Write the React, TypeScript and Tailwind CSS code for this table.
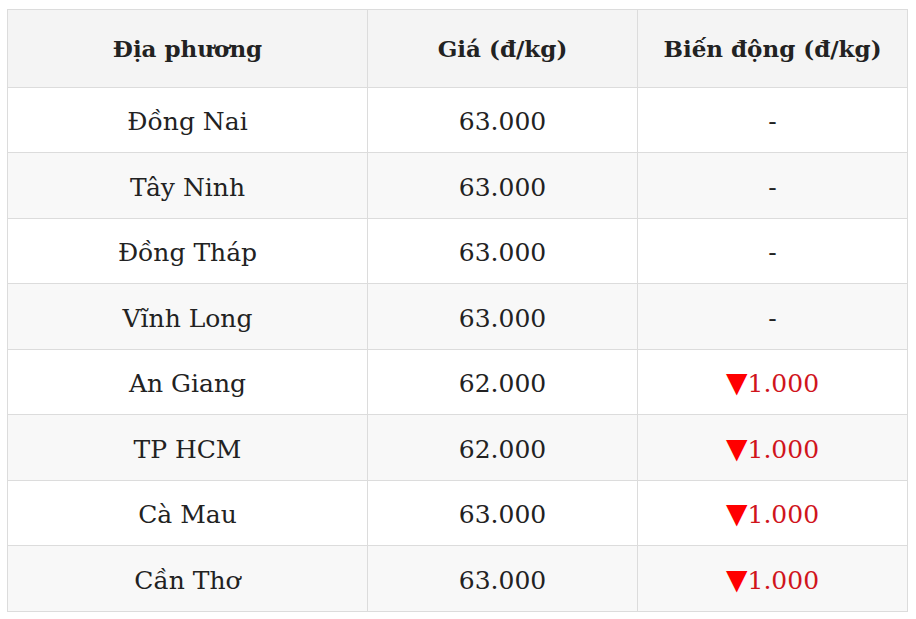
import React from "react";

type Row = { place: string; price: string; change: string | null };

const rows: Row[] = [
    { place: "Đồng Nai", price: "63.000", change: null },
    { place: "Tây Ninh", price: "63.000", change: null },
    { place: "Đồng Tháp", price: "63.000", change: null },
    { place: "Vĩnh Long", price: "63.000", change: null },
    { place: "An Giang", price: "62.000", change: "1.000" },
    { place: "TP HCM", price: "62.000", change: "1.000" },
    { place: "Cà Mau", price: "63.000", change: "1.000" },
    { place: "Cần Thơ", price: "63.000", change: "1.000" },
];

const App: React.FC = () => {
    return (
        <div className="bg-white w-[916px] h-[619px] pt-[9px] pl-[7px] font-['DejaVu_Serif',serif] text-[#222]">
            <table className="table-fixed border-collapse w-[900px] text-center">
                <colgroup>
                    <col className="w-[360px]" />
                    <col className="w-[270px]" />
                    <col className="w-[270px]" />
                </colgroup>
                <thead>
                    <tr className="bg-[#f4f4f4] h-[78px]">
                        <th className="border border-[#dcdcdc] text-[23px] font-bold pt-[2px]">Địa phương</th>
                        <th className="border border-[#dcdcdc] text-[23px] font-bold pt-[2px]">Giá (đ/kg)</th>
                        <th className="border border-[#dcdcdc] text-[23px] font-bold pt-[2px]">Biến động (đ/kg)</th>
                    </tr>
                </thead>
                <tbody>
                    {rows.map((r, i) => (
                        <tr
                            key={r.place}
                            className={i % 2 === 1 ? "bg-[#f8f8f8] h-[66px]" : "bg-white h-[65px]"}
                        >
                            <td className="border border-[#dcdcdc] text-[25px] pt-[4px]">{r.place}</td>
                            <td className="border border-[#dcdcdc] text-[25px] pt-[4px]">{r.price}</td>
                            <td className="border border-[#dcdcdc] text-[25px] pt-[4px]">
                                {r.change ? (
                                    <span className="text-[#d0141c] inline-flex items-baseline">
                                        <span className="text-[#ff0000] text-[28px] leading-none font-['DejaVu_Sans',sans-serif]">▼</span>
                                        {r.change}
                                    </span>
                                ) : (
                                    "-"
                                )}
                            </td>
                        </tr>
                    ))}
                </tbody>
            </table>
        </div>
    );
};

export default App;
